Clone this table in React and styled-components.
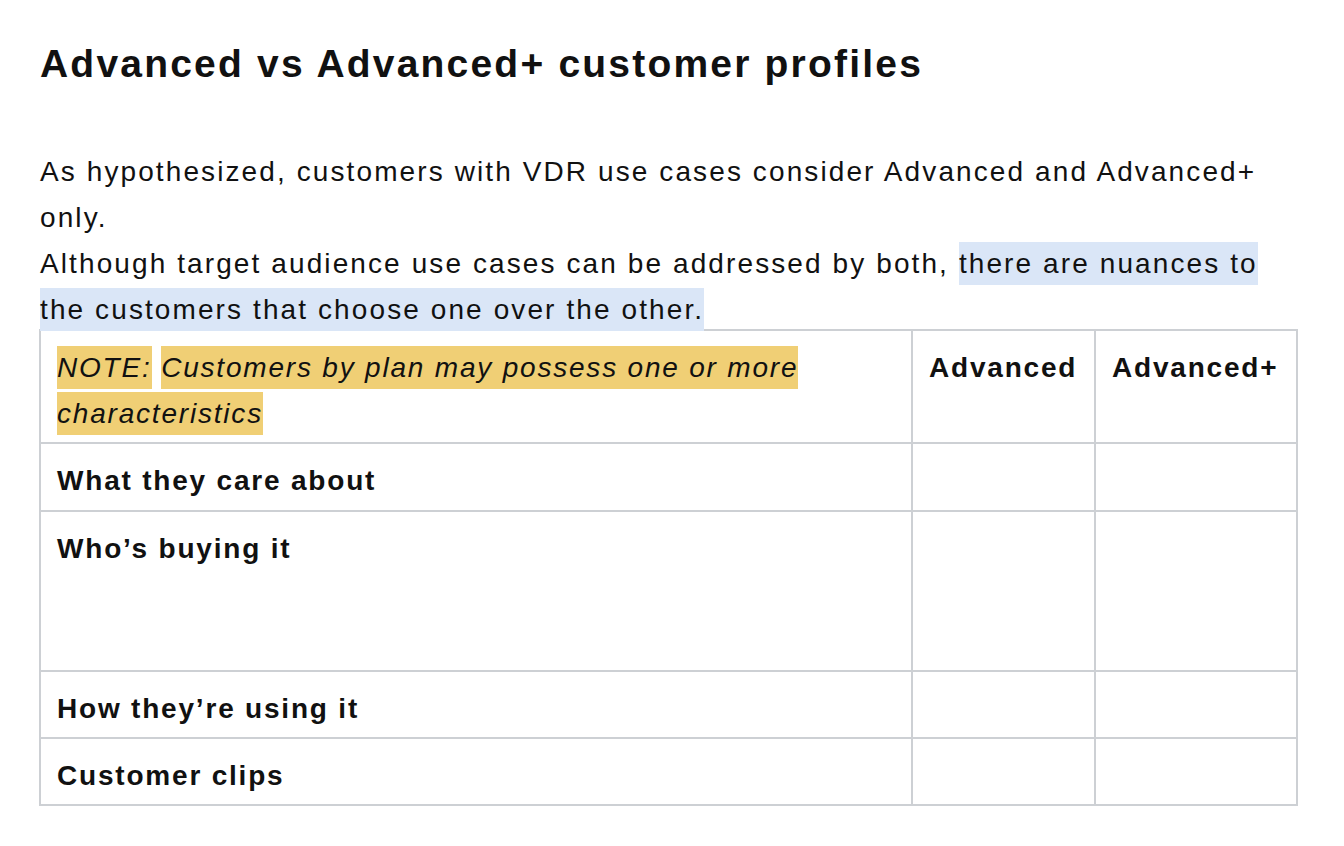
import React from "react";
import styled, { createGlobalStyle } from "styled-components";

const GlobalStyle = createGlobalStyle`
  html, body {
    margin: 0;
    padding: 0;
    background: #ffffff;
  }
  body {
    font-family: "Liberation Sans", Arial, sans-serif;
    color: #111111;
  }
`;

const Page = styled.div`
  width: 1256px;
  padding: 40px 0 40px 40px;
`;

const Title = styled.h1`
  margin: 0 0 61px;
  font-size: 39px;
  line-height: 48px;
  font-weight: 700;
  letter-spacing: 2.2px;
`;

const Paragraph = styled.p`
  margin: 0;
  font-size: 28px;
  line-height: 46px;
  letter-spacing: 2.1px;
`;

const Mark = styled.span`
  background: ${(p) => p.$color};
  padding: 6px 0;
  box-decoration-break: clone;
  -webkit-box-decoration-break: clone;
`;

const Table = styled.table`
  width: 1257px;
  margin: -4px 0 0 -1px;
  border-collapse: collapse;
  table-layout: fixed;
`;

const Cell = styled.td`
  border: 2px solid #cdd0d4;
  padding: 14px 16px 2px;
  vertical-align: top;
  font-size: 28px;
  line-height: 46px;
  font-weight: ${(p) => (p.$bold ? 700 : 400)};
  font-style: ${(p) => (p.$italic ? "italic" : "normal")};
  height: ${(p) => p.$h}px;
  box-sizing: border-box;
  letter-spacing: 1.8px;
`;

const rows = [
  { label: "What they care about", h: 68 },
  { label: "Who\u2019s buying it", h: 160 },
  { label: "How they\u2019re using it", h: 67 },
  { label: "Customer clips", h: 67 },
];

const App = () => {
  return (
    <>
      <GlobalStyle />
      <Page>
        <Title>Advanced vs Advanced+ customer profiles</Title>
        <Paragraph>
          As hypothesized, customers with VDR use cases consider Advanced and Advanced+ only.
          <br />
          Although target audience use cases can be addressed by both,{" "}
          <Mark $color="#dae6f7">there are nuances to the customers that choose one over the other.</Mark>
        </Paragraph>
        <Table>
          <colgroup>
            <col style={{ width: 872 }} />
            <col style={{ width: 183 }} />
            <col style={{ width: 202 }} />
          </colgroup>
          <tbody>
            <tr>
              <Cell $italic $h={113}>
                <Mark $color="#f0cf75">NOTE:</Mark>{" "}
                <Mark $color="#f0cf75">Customers by plan may possess one or more characteristics</Mark>
              </Cell>
              <Cell $bold>Advanced</Cell>
              <Cell $bold>Advanced+</Cell>
            </tr>
            {rows.map((r) => (
              <tr key={r.label}>
                <Cell $bold $h={r.h}>{r.label}</Cell>
                <Cell />
                <Cell />
              </tr>
            ))}
          </tbody>
        </Table>
      </Page>
    </>
  );
};

export default App;
